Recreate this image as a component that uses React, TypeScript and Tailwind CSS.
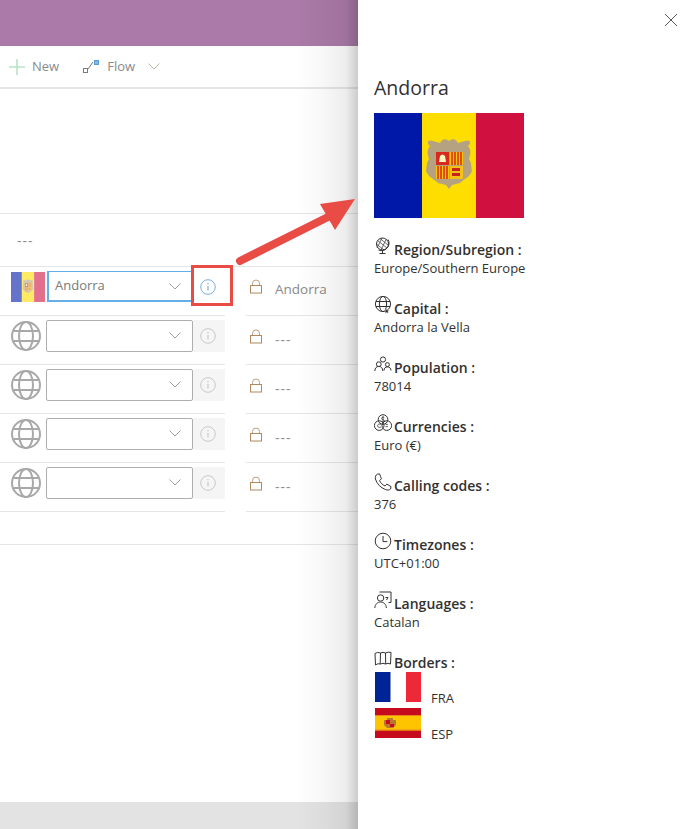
const Stroke = ({ children, size = 18 }: { children: React.ReactNode; size?: number }) => (
  <svg width={size} height={size} viewBox="0 0 18 18" fill="none" stroke="#333" strokeWidth="1" className="shrink-0">
    {children}
  </svg>
);

const AndorraFlag = ({ className = "" }: { className?: string }) => (
  <svg viewBox="0 0 150 105" preserveAspectRatio="none" className={className}>
    <rect width="48" height="105" fill="#0018a8" />
    <rect x="48" width="54" height="105" fill="#fedd00" />
    <rect x="102" width="48" height="105" fill="#d01140" />
    <path d="M56 33 C52 30 54 26 59 28 L66 30 C68 26 71 25 75 28 C79 25 82 26 84 30 L91 28 C96 26 98 30 94 33 C98 38 96 42 95 46 C98 50 97 55 98 58 C96 64 90 66 86 70 L78 72 L75 76 L72 72 L64 70 C60 66 54 64 52 58 C53 55 52 50 55 46 C54 42 52 38 56 33Z" fill="#b5a281" />
    <rect x="62" y="39" width="13" height="13" fill="#d9281e" />
    <path d="M65 49 L66 43 Q68.5 40 71 43 L72 49Z" fill="#fff6c0" />
    <rect x="76" y="39" width="13" height="13" fill="#fcc800" />
    <path d="M78 39v13M81 39v13M84 39v13M87 39v13" stroke="#d01c1f" strokeWidth="1.4" />
    <rect x="62" y="53" width="13" height="13" fill="#fcc800" />
    <path d="M64 53v13M67 53v13M70 53v13M73 53v13" stroke="#d01c1f" strokeWidth="1.4" />
    <rect x="76" y="53" width="13" height="13" fill="#f2c21a" />
    <path d="M78 55h8v3h-8zM78 60h8v3h-8z" fill="#c8241b" />
  </svg>
);

const GlobeBig = () => (
  <svg width="30" height="30" viewBox="0 0 30 30" fill="none" stroke="#a8a8a8" strokeWidth="2" className="shrink-0">
    <circle cx="15" cy="15" r="14" />
    <ellipse cx="15" cy="15" rx="7" ry="14" />
    <path d="M2.5 10h25M2.5 20h25" />
  </svg>
);

const Chevron = ({ color = "#8a8a8a" }: { color?: string }) => (
  <svg width="12" height="7" viewBox="0 0 12 7" fill="none" stroke={color} strokeWidth="1" className="shrink-0">
    <path d="M0.5 0.5 L6 6 L11.5 0.5" />
  </svg>
);

const Lock = () => (
  <svg width="12" height="15" viewBox="0 0 12 15" fill="none" className="mb-[6px] shrink-0">
    <path d="M2.5 6.5V4.5a3.5 3.5 0 0 1 7 0v2" stroke="#b9a184" strokeWidth="1" />
    <rect x="0.5" y="6.5" width="11" height="7.5" stroke="#b08a5e" strokeWidth="1" />
  </svg>
);

const Info = ({ color }: { color: string }) => (
  <svg width="16" height="16" viewBox="0 0 16 16" fill="none" className="shrink-0">
    <circle cx="8" cy="8" r="7.3" stroke={color} strokeWidth="1" />
    <path d="M8 7v4.5" stroke={color} strokeWidth="1.2" />
    <circle cx="8" cy="4.8" r="0.8" fill={color} />
  </svg>
);

const icons: Record<string, React.ReactNode> = {
  region: (
    <Stroke>
      <circle cx="8.5" cy="7" r="6" />
      <path d="M3.5 3.5 L13 11M6 1.5 L14 8M2.5 7 L10 13M8 1 L3 11M12 2.5 L7 13" strokeWidth="0.7" />
      <path d="M14 2.5a7.5 7.5 0 0 1-9.5 10.5M8.5 14v2.5M5.5 16.5h6" />
    </Stroke>
  ),
  capital: (
    <Stroke>
      <circle cx="9" cy="8" r="7.6" />
      <ellipse cx="9" cy="8" rx="3.6" ry="7.6" />
      <path d="M2 5.5h14M2 10.5h14" />
      <path d="M12.7 12.5l.8 1.7 1.8.2-1.3 1.2.4 1.8-1.7-.9-1.7.9.4-1.8-1.3-1.2 1.8-.2z" fill="#333" stroke="#fff" strokeWidth="0.4" />
    </Stroke>
  ),
  population: (
    <Stroke>
      <circle cx="9" cy="4.5" r="2.6" />
      <circle cx="4.8" cy="9.2" r="2.4" />
      <circle cx="13.4" cy="9.6" r="2" />
      <path d="M0.8 16c0-3 1.8-4.6 4-4.6s4 1.6 4 4.6M10 15.5c0-2.4 1.4-3.6 3.4-3.6s3.6 1.2 3.6 3.6" />
    </Stroke>
  ),
  currencies: (
    <Stroke>
      <circle cx="9" cy="5.5" r="4.8" />
      <circle cx="5.2" cy="11.6" r="4.8" />
      <circle cx="12.8" cy="11.6" r="4.8" />
      <path d="M10.3 3.8c-.8-.8-2.8-.7-2.8.6 0 1.5 3 .9 3 2.5 0 1.2-2.1 1.3-3 .5M9 2v7M7 10.4c-1.4-1-3.5 0-3.5 1.3S5.6 14 7 13M11.5 10.4h2.4M11.5 12.6h2.4" strokeWidth="0.8" />
    </Stroke>
  ),
  calling: (
    <Stroke>
      <path d="M3.2 1.2 L5.6 0.9 C6.4 3 7 4.6 7.4 5.8 L5.6 7.6 C6.6 10 8.6 12 11 13 L12.9 11.1 L17 13.6 L16.6 16 C15.6 17 13.6 17.4 11.6 16.6 C6.4 14.6 3 11 1.4 6 C0.9 4 1.8 2 3.2 1.2Z" />
    </Stroke>
  ),
  timezones: (
    <Stroke>
      <circle cx="9" cy="9" r="7.8" />
      <path d="M9 4v5.6h4.4" />
    </Stroke>
  ),
  languages: (
    <Stroke>
      <circle cx="6.6" cy="7" r="3.2" />
      <path d="M0.8 17c.2-3.6 2.6-6 5.8-6s5.6 2.4 5.8 6" />
      <path d="M5.5 1h11.5v10.5h-2.5M11.5 6.5 L14 6.5 L12.5 9" />
    </Stroke>
  ),
  borders: (
    <Stroke>
      <path d="M1 3.5 Q3.5 1.5 6.5 3 Q9 1.5 11.5 3 Q14 1.5 17 2.5 L16.5 14 Q14 12.5 11.5 14 Q9 12.5 6.5 14 Q3.5 13 1.5 15Z" />
      <path d="M6.5 3l-.3 11M11.5 3l.2 11" />
    </Stroke>
  ),
};

const details = [
  ["region", "Region/Subregion :", "Europe/Southern Europe"],
  ["capital", "Capital :", "Andorra la Vella"],
  ["population", "Population :", "78014"],
  ["currencies", "Currencies :", "Euro (€)"],
  ["calling", "Calling codes :", "376"],
  ["timezones", "Timezones :", "UTC+01:00"],
  ["languages", "Languages :", "Catalan"],
];

const Heading = ({ icon, label }: { icon: string; label: string }) => (
  <div className="flex h-[20px] items-center gap-[2px]">
    <span className="-mt-[7px]">{icons[icon]}</span>
    <span className="text-[14px] font-semibold text-[#323130]">{label}</span>
  </div>
);

const EmptyRow = () => (
  <div className="flex h-[49px]">
    <div className="flex w-[225px] shrink-0 items-center border-b border-[#e6e6e6] pb-[9px] pl-[11px]">
      <GlobeBig />
      <div className="ml-[5px] flex h-[32px] w-[147px] items-center justify-end rounded-[2px] border border-[#b0aeac] pr-[11px]">
        <Chevron color="#a0a0a0" />
      </div>
      <div className="flex h-[32px] w-[32px] items-center justify-center bg-[#f5f5f5] pr-[2px]">
        <Info color="#c8c8c8" />
      </div>
    </div>
    <div className="ml-[21px] flex flex-1 items-center border-b border-[#e6e6e6] pb-[2px] pl-[4px]">
      <Lock />
      <span className="ml-[13px] text-[14px] tracking-[1px] text-[#8f8f8f]">---</span>
    </div>
  </div>
);

export default function App() {
  return (
    <div className="relative flex h-[829px] w-[696px] overflow-hidden bg-white font-['Open_Sans','Noto_Sans',sans-serif]">
      <div className="relative flex w-[358px] shrink-0 flex-col">
        <div className="h-[46px] bg-[#ab7aa8]" />
        <div className="flex h-[41px] items-center text-[13px] text-[#8a8a8a]">
          <svg width="16" height="16" viewBox="0 0 16 16" className="ml-[9px]" stroke="#b9e3c5" strokeWidth="1.6">
            <path d="M8 0v16M0 8h16" />
          </svg>
          <span className="ml-[7px]">New</span>
          <svg width="17" height="14" viewBox="0 0 17 14" fill="none" className="ml-[24px]" stroke="#7a7a7a">
            <rect x="0.5" y="8.5" width="4" height="4" />
            <path d="M5 9 L10 2" />
            <rect x="11.5" y="0.5" width="4" height="4" fill="#80b9e6" stroke="#5a9bd5" />
          </svg>
          <span className="ml-[7px]">Flow</span>
          <span className="ml-[13px]">
            <Chevron color="#c0b8a8" />
          </span>
        </div>
        <div className="h-[126px] border-t-2 border-[#e6e6e6]" />
        <div className="flex h-[54px] items-center border-y border-[#e6e6e6] pl-[17px] text-[14px] tracking-[1px] text-[#8f8f8f]">---</div>
        <div className="flex h-[49px]">
          <div className="flex w-[225px] shrink-0 items-center border-b border-[#e6e6e6] pb-[9px] pl-[11px]">
            <AndorraFlag className="h-[30px] w-[34px] shrink-0 opacity-60" />
            <div className="ml-[2px] flex h-[31px] w-[146px] items-center justify-between border border-b-2 border-l-2 border-[#66aee8] pl-[6px] pr-[11px] text-[13px] text-[#7a7a7a]">
              Andorra
              <Chevron color="#a0a0a0" />
            </div>
            <div className="flex h-[32px] w-[29px] items-center justify-center">
              <Info color="#7aaee0" />
            </div>
          </div>
          <div className="ml-[21px] flex flex-1 items-center border-b border-[#e6e6e6] pb-[3px] pl-[4px]">
            <Lock />
            <span className="ml-[13px] text-[13.5px] font-medium text-[#8a8a8a]">Andorra</span>
          </div>
        </div>
        <EmptyRow />
        <EmptyRow />
        <EmptyRow />
        <EmptyRow />
        <div className="h-[33px] border-b border-[#e6e6e6]" />
        <div className="flex-1" />
        <div className="h-[27px] bg-[#e3e3e3]" />
        <div className="absolute inset-y-0 right-0 w-[62px] bg-[linear-gradient(to_right,rgba(0,0,0,0)_0%,rgba(0,0,0,0.03)_45%,rgba(0,0,0,0.07)_80%,rgba(0,0,0,0.2)_100%)]" />
      </div>

      <div className="relative flex-1 bg-white pl-[16px] pt-[75px] text-[13px] text-[#323130]">
        <svg width="12" height="12" viewBox="0 0 12 12" stroke="#555" strokeWidth="1" className="absolute right-[19px] top-[14px]">
          <path d="M0 0L12 12M12 0L0 12" />
        </svg>
        <h1 className="h-[25px] text-[19.5px] font-medium leading-[25px] text-[#323130]">Andorra</h1>
        <AndorraFlag className="mt-[13px] block h-[105px] w-[150px]" />
        <div className="mt-[21px] flex flex-col gap-[19px]">
          {details.map(([icon, label, value]) => (
            <div key={icon} className="h-[40px]">
              <Heading icon={icon} label={label} />
              <div className="h-[20px] leading-[18px]">{value}</div>
            </div>
          ))}
          <div>
            <Heading icon="borders" label="Borders :" />
            <div className="flex h-[36px] items-start pl-[1px]">
              <svg width="46" height="30" viewBox="0 0 46 30" className="shrink-0">
                <rect width="46" height="30" fill="#fff" />
                <rect width="15.5" height="30" fill="#002395" />
                <rect x="31" width="15" height="30" fill="#ed2939" />
              </svg>
              <span className="ml-[10px] mt-[16px] leading-[20px]">FRA</span>
            </div>
            <div className="flex h-[36px] items-start pl-[1px]">
              <svg width="46" height="30" viewBox="0 0 46 30" className="shrink-0">
                <rect width="46" height="30" fill="#c60b1e" />
                <rect y="7" width="46" height="15.5" fill="#ffc400" />
                <path d="M0 7.5h46M0 22h46" stroke="#e8851a" strokeWidth="1" />
                <path d="M9 12h3v-2h6v2h3v5l-3 3h-6l-3-3z" fill="#b9782e" />
                <rect x="11" y="12" width="4" height="4" fill="#c60b1e" />
                <rect x="15" y="16" width="4" height="3" fill="#c60b1e" />
              </svg>
              <span className="ml-[10px] mt-[16px] leading-[20px]">ESP</span>
            </div>
          </div>
        </div>
      </div>

      <div className="absolute left-[191px] top-[265px] h-[41px] w-[42px] border-[3px] border-[#e94b45]" />
      <svg width="130" height="80" viewBox="0 0 130 80" className="absolute left-[230px] top-[195px]">
        <path d="M10 66 L100 21" stroke="#e94b45" strokeWidth="8" strokeLinecap="round" />
        <path d="M90 9 L125 4 L105 35Z" fill="#e94b45" />
      </svg>
    </div>
  );
}
